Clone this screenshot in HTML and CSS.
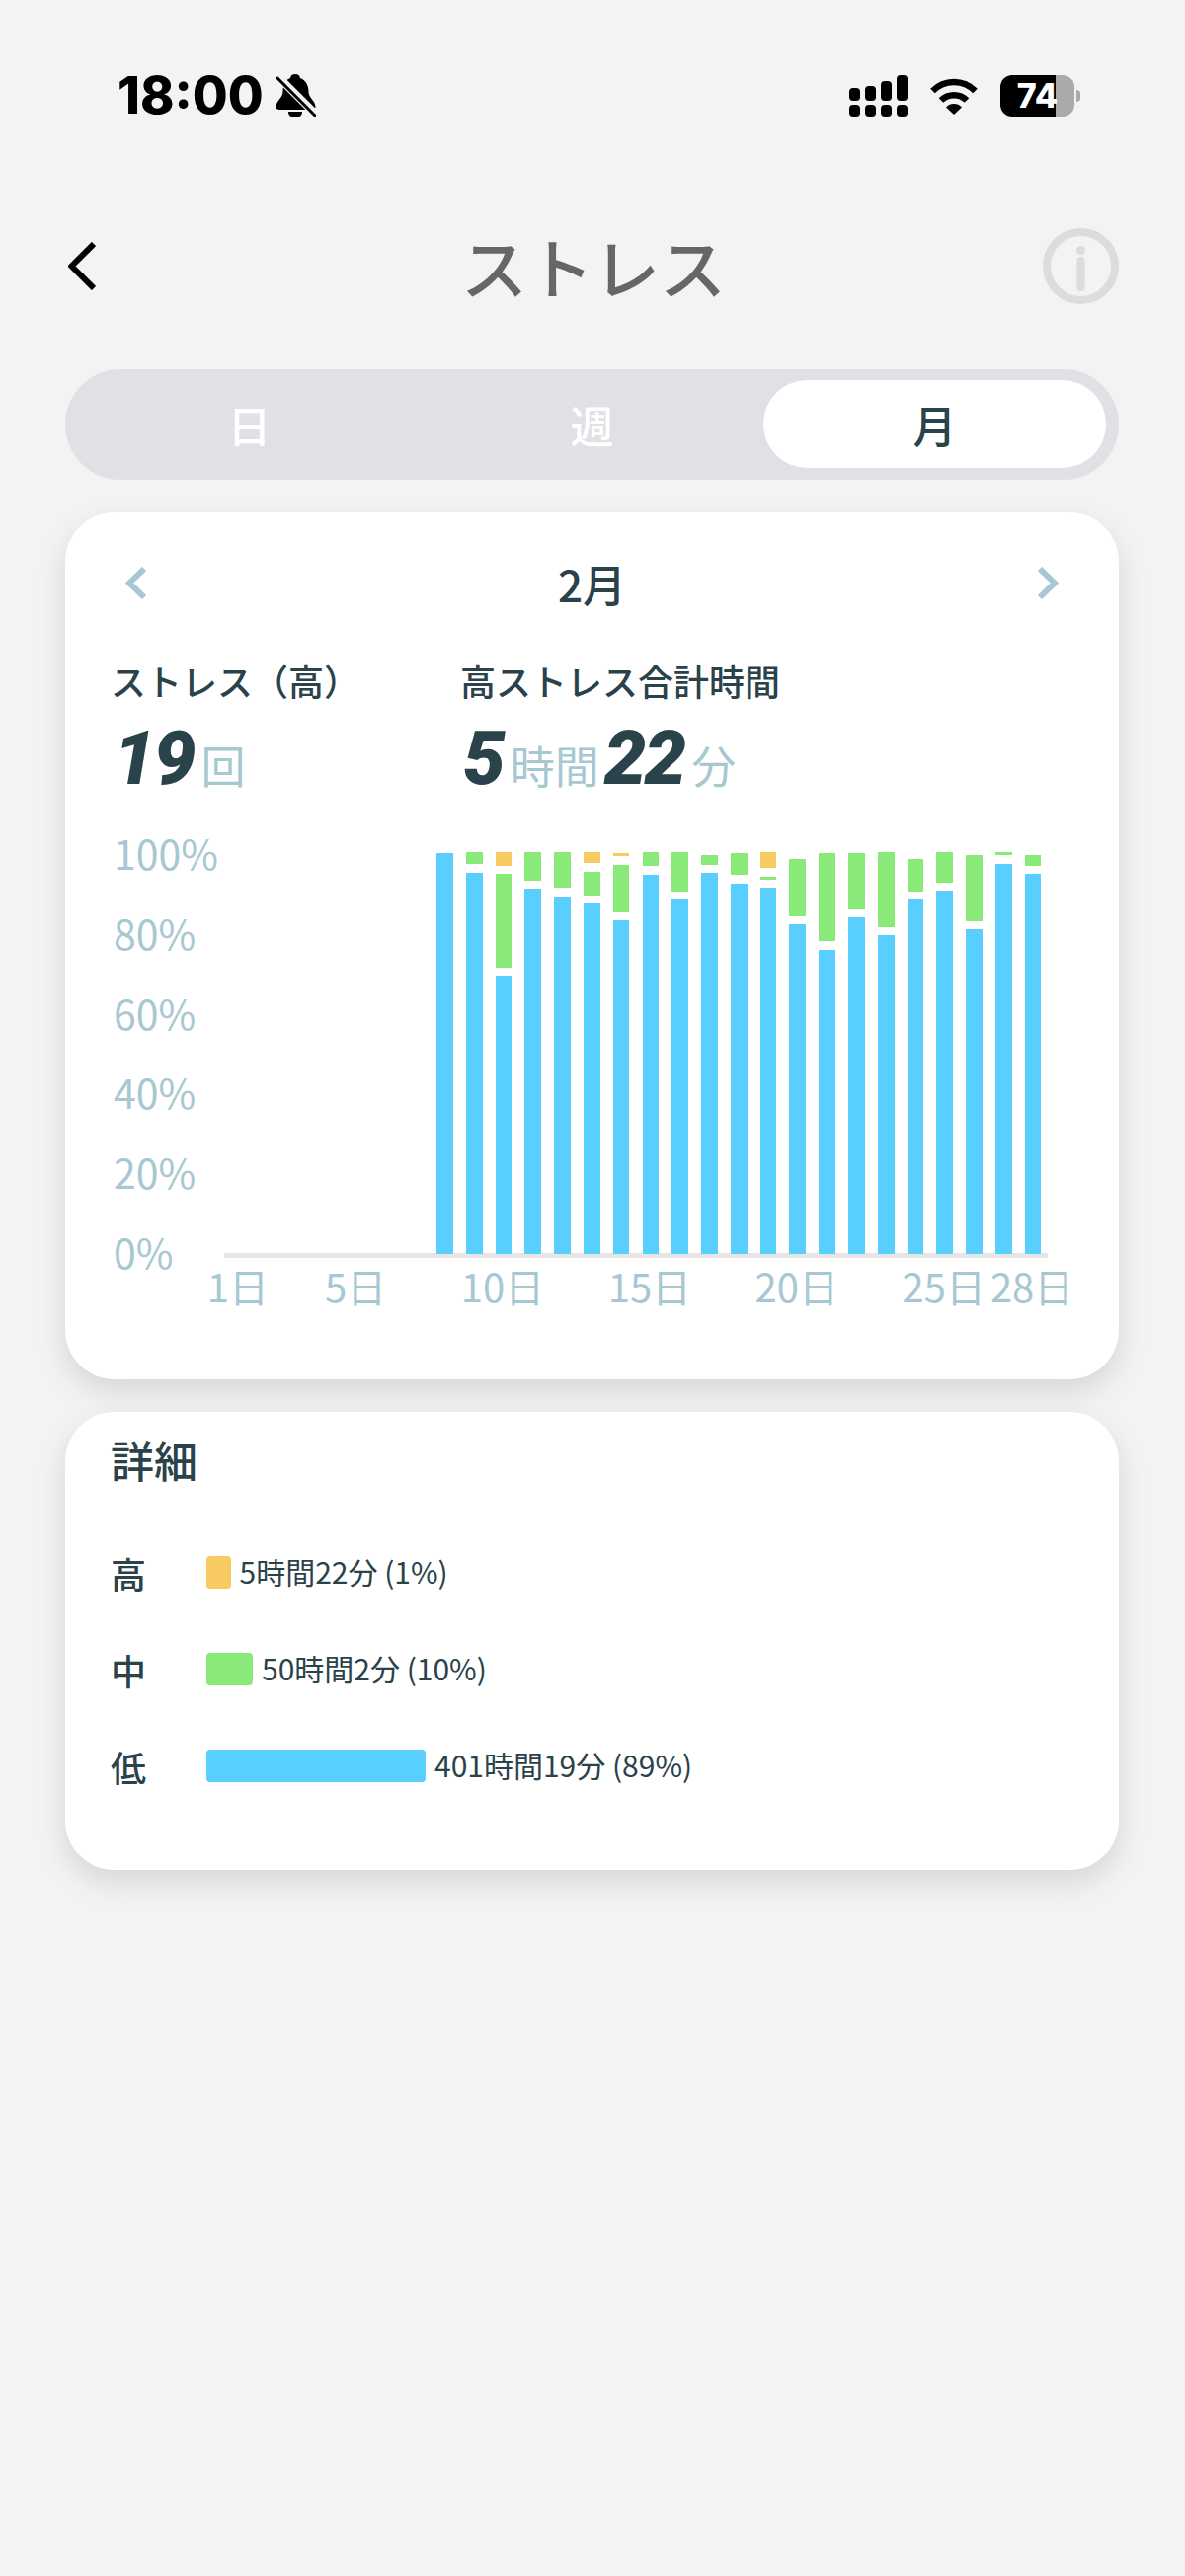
FILE: index.html
```html
<!DOCTYPE html>
<html lang="ja">

<head>
    <meta charset="UTF-8">
    <meta name="viewport" content="width=device-width, initial-scale=1.0">
    <title>ストレス</title>
    <link rel="stylesheet" href="styles.css">
</head>

<body>
    <div class="page">

        <div class="status">
            <div class="status-left">
                <span class="time">18:00</span>
                <svg class="bell" width="41" height="44" viewBox="0 0 41 44">
                    <path d="M20 0c-3 0-4.500 1.500-5 4C9 6 7.500 12 7.500 18c0 6-7 9-7 15 0 2 1.500 3 3.500 3h33c2 0 3.500-1 3.500-3 0-6-7-9-7-15 0-6-2.500-12-8.500-14C24.500 1.500 23 0 20 0z" fill="#000" />
                    <path d="M13 38h14c0 4-3 6-7 6s-7-2-7-6z" fill="#000" />
                    <line x1="1" y1="1" x2="40" y2="40" stroke="#f3f3f4" stroke-width="8" />
                    <line x1="2" y1="4" x2="40" y2="42" stroke="#000" stroke-width="3" stroke-linecap="round" />
                </svg>
            </div>
            <div class="status-right">
                <svg width="59" height="42" viewBox="0 0 59 42" fill="#000">
                    <rect x="0" y="30" width="11" height="12" rx="4" />
                    <rect x="16" y="30" width="11" height="12" rx="4" />
                    <rect x="32" y="30" width="11" height="12" rx="4" />
                    <rect x="48" y="30" width="11" height="12" rx="4" />
                    <rect x="0" y="13" width="11" height="13" rx="4" />
                    <rect x="16" y="11" width="11" height="15" rx="4" />
                    <rect x="32" y="6" width="11" height="20" rx="4" />
                    <rect x="48" y="0" width="11" height="26" rx="4" />
                </svg>
                <svg width="50" height="38" viewBox="0 0 50 38">
                    <path d="M3.500 14A30 30 0 0 1 46.500 14" fill="none" stroke="#000" stroke-width="6.500" />
                    <path d="M12 23.500A18.500 18.500 0 0 1 38 23.500" fill="none" stroke="#000" stroke-width="6.500" />
                    <path d="M17 30.500A11 11 0 0 1 33 30.500L25 38z" fill="#000" />
                </svg>
                <div class="battery">74</div>
            </div>
        </div>

        <div class="header">
            <svg width="28" height="49" viewBox="0 0 28 49">
                <polyline points="26,2 3.500,24.500 26,47" fill="none" stroke="#000" stroke-width="6" />
            </svg>
            <div class="title">ストレス</div>
            <svg class="info" width="77" height="77" viewBox="0 0 77 77">
                <circle cx="38.500" cy="38.500" r="34.500" fill="none" stroke="#dcdcdc" stroke-width="8" />
                <circle cx="38.500" cy="22.500" r="4.500" fill="#dcdcdc" />
                <line x1="38.500" y1="33" x2="38.500" y2="60" stroke="#dcdcdc" stroke-width="8" stroke-linecap="round" />
            </svg>
        </div>

        <div class="tabs">
            <div class="tab">日</div>
            <div class="tab">週</div>
            <div class="tab active">月</div>
        </div>

        <div class="card chart-card">
            <div class="month-row">
                <svg width="21" height="33" viewBox="0 0 21 33">
                    <polyline points="19,2 4,16.500 19,31" fill="none" stroke="#a7c8d2" stroke-width="6" />
                </svg>
                <div class="month">2月</div>
                <svg width="21" height="33" viewBox="0 0 21 33">
                    <polyline points="2,2 17,16.500 2,31" fill="none" stroke="#a7c8d2" stroke-width="6" />
                </svg>
            </div>

            <div class="stats">
                <div class="stat">
                    <div class="stat-label">ストレス（高）</div>
                    <div class="stat-value"><b>19</b><span>回</span></div>
                </div>
                <div class="stat">
                    <div class="stat-label">高ストレス合計時間</div>
                    <div class="stat-value"><b>5</b><span>時間</span><b>22</b><span>分</span></div>
                </div>
            </div>

            <div class="chart">
                <div class="y-axis">
                    <span>100%</span>
                    <span>80%</span>
                    <span>60%</span>
                    <span>40%</span>
                    <span>20%</span>
                    <span>0%</span>
                </div>
                <div class="plot">
                    <div class="bars">
                        <div class="bar"><i class="low" style="height:406px"></i></div>
                        <div class="bar"><i class="mid" style="height:12px"></i><i class="low" style="height:386px"></i></div>
                        <div class="bar"><i class="high" style="height:13.300px"></i><i class="mid" style="height:95.300px"></i><i class="low" style="height:281px"></i></div>
                        <div class="bar"><i class="mid" style="height:28.700px"></i><i class="low" style="height:369.300px"></i></div>
                        <div class="bar"><i class="mid" style="height:36px"></i><i class="low" style="height:362px"></i></div>
                        <div class="bar"><i class="high" style="height:11px"></i><i class="mid" style="height:24px"></i><i class="low" style="height:354.700px"></i></div>
                        <div class="bar"><i class="high" style="height:3.700px"></i><i class="mid" style="height:48px"></i><i class="low" style="height:337.700px"></i></div>
                        <div class="bar"><i class="mid" style="height:14px"></i><i class="low" style="height:384px"></i></div>
                        <div class="bar"><i class="mid" style="height:39.300px"></i><i class="low" style="height:358.700px"></i></div>
                        <div class="bar"><i class="mid" style="height:9.700px"></i><i class="low" style="height:385.300px"></i></div>
                        <div class="bar"><i class="mid" style="height:22.700px"></i><i class="low" style="height:375px"></i></div>
                        <div class="bar"><i class="high" style="height:16px"></i><i class="mid" style="height:3.300px"></i><i class="low" style="height:370.300px"></i></div>
                        <div class="bar"><i class="mid" style="height:58px"></i><i class="low" style="height:333.700px"></i></div>
                        <div class="bar"><i class="mid" style="height:89.700px"></i><i class="low" style="height:308px"></i></div>
                        <div class="bar"><i class="mid" style="height:57.300px"></i><i class="low" style="height:340.300px"></i></div>
                        <div class="bar"><i class="mid" style="height:75.700px"></i><i class="low" style="height:322.300px"></i></div>
                        <div class="bar"><i class="mid" style="height:33px"></i><i class="low" style="height:358.700px"></i></div>
                        <div class="bar"><i class="mid" style="height:30.300px"></i><i class="low" style="height:367.700px"></i></div>
                        <div class="bar"><i class="mid" style="height:66.700px"></i><i class="low" style="height:328.700px"></i></div>
                        <div class="bar"><i class="mid" style="height:3.300px"></i><i class="low" style="height:395px"></i></div>
                        <div class="bar"><i class="mid" style="height:11.300px"></i><i class="low" style="height:384.300px"></i></div>
                    </div>
                    <div class="x-axis">
                        <span style="grid-column:1">1日</span>
                        <span style="grid-column:5">5日</span>
                        <span style="grid-column:10">10日</span>
                        <span style="grid-column:15">15日</span>
                        <span style="grid-column:20">20日</span>
                        <span style="grid-column:25">25日</span>
                        <span style="grid-column:28">28日</span>
                    </div>
                </div>
            </div>
        </div>

        <div class="card detail-card">
            <div class="detail-title">詳細</div>
            <div class="detail-row">
                <div class="detail-label">高</div>
                <div class="detail-bar high" style="width:24.500px"></div>
                <div class="detail-text">5時間22分 (1%)</div>
            </div>
            <div class="detail-row">
                <div class="detail-label">中</div>
                <div class="detail-bar mid" style="width:47px"></div>
                <div class="detail-text">50時間2分 (10%)</div>
            </div>
            <div class="detail-row">
                <div class="detail-label">低</div>
                <div class="detail-bar low" style="width:222px"></div>
                <div class="detail-text">401時間19分 (89%)</div>
            </div>
        </div>

    </div>
</body>

</html>
```
FILE: styles.css
```css
* {
    box-sizing: border-box;
}

body {
    margin: 0;
    background-color: #f3f3f4;
    font-family: "Noto Sans CJK JP", "Noto Sans", sans-serif;
    color: #2a424a;
}

.page {
    width: 1200px;
    height: 2609px;
    padding: 66px 67px 0 66px;
    overflow: hidden;
}

/* status bar */
.status {
    height: 62px;
    display: flex;
    align-items: center;
    justify-content: space-between;
    padding-left: 53px;
    color: #000;
}

.status-left {
    display: flex;
    align-items: center;
    gap: 12px;
}

.time {
    font-family: Inter, sans-serif;
    font-size: 52px;
    font-weight: 800;
    line-height: 62px;
}

.status-right {
    display: flex;
    align-items: center;
    gap: 22px;
    padding-right: 45px;
}

.battery {
    position: relative;
    width: 75px;
    height: 42px;
    border-radius: 12px;
    background: linear-gradient(90deg, #000 74.500%, #aaa 74.500%);
    color: #fff;
    font-family: Inter, sans-serif;
    font-size: 34px;
    font-weight: 800;
    line-height: 42px;
    text-align: center;
}

.battery::after {
    content: "";
    position: absolute;
    left: 77px;
    top: 15px;
    width: 4px;
    height: 12px;
    border-radius: 0 6px 6px 0;
    background-color: #aaa;
}

/* header */
.header {
    height: 78px;
    margin-top: 102px;
    padding-left: 3px;
    display: grid;
    grid-template-columns: 1fr auto 1fr;
    align-items: center;
}

.title {
    font-size: 67px;
    font-weight: 500;
    line-height: 78px;
    color: #666;
}

.info {
    justify-self: end;
}

/* 日 週 月 */
.tabs {
    height: 112px;
    margin-top: 66px;
    padding: 11px 13px;
    border-radius: 56px;
    background-color: #e0e0e5;
    display: flex;
    justify-content: space-between;
}

.tab {
    width: 347px;
    border-radius: 45px;
    color: #fff;
    font-size: 44px;
    font-weight: 500;
    line-height: 90px;
    text-align: center;
}

.tab.active {
    height: 89px;
    background-color: #fff;
    color: #2a424a;
}

/* cards */
.card {
    background-color: #fff;
    border-radius: 50px;
    box-shadow: 0 12px 30px rgba(0, 0, 0, 0.12);
    margin-top: 33px;
}

.chart-card {
    padding: 55px 0 73px;
}

.month-row {
    display: flex;
    align-items: center;
    justify-content: space-between;
    padding: 0 61px;
    height: 33px;
}

.month {
    font-size: 44px;
    font-weight: 500;
    line-height: 33px;
    padding-top: 2px;
}

.stats {
    margin-top: 60px;
    padding-left: 46px;
    display: grid;
    grid-template-columns: 354px auto;
}

.stat-label {
    font-size: 36px;
    font-weight: 500;
    line-height: 44px;
}

.stat-value {
    display: flex;
    align-items: baseline;
    height: 84px;
    margin-top: 15px;
    line-height: 84px;
}

.stat-value b {
    font-family: Roboto, sans-serif;
    font-size: 76px;
    font-weight: 900;
    font-style: italic;
    letter-spacing: -2px;
    margin-left: 3px;
}

.stat-value span {
    font-size: 45px;
    color: #a7c8d2;
    margin-left: 7px;
}

.stat-value span + b {
    margin-left: 5px;
}

/* chart */
.chart {
    margin-top: 53px;
    display: flex;
}

.y-axis {
    width: 161px;
    height: 404px;
    padding-left: 49px;
    display: flex;
    flex-direction: column;
    justify-content: space-between;
    color: #a7c8d2;
    font-size: 41px;
}

.y-axis span {
    height: 0;
    line-height: 0;
}

.plot {
    width: 834px;
}

.bars {
    height: 411px;
    border-bottom: 5px solid #e6e6e6;
    display: grid;
    grid-template-columns: repeat(28, minmax(0, 1fr));
    justify-items: center;
}

.bar {
    width: 16.700px;
    height: 100%;
    display: flex;
    flex-direction: column;
    justify-content: flex-end;
    gap: 8.300px;
}

.bar:first-child {
    grid-column-start: 8;
}

.bar i {
    display: block;
}

.high {
    background-color: #f7cb62;
}

.mid {
    background-color: #88e878;
}

.low {
    background-color: #58cfff;
}

.x-axis {
    margin: 6px 1px 0 -1px;
    display: grid;
    grid-template-columns: repeat(28, minmax(0, 1fr));
    justify-items: center;
    color: #a7c8d2;
    font-size: 40px;
    line-height: 44px;
}

.x-axis span {
    grid-row: 1;
    white-space: nowrap;
}

/* detail */
.detail-card {
    padding: 18px 46px 89px;
}

.detail-title {
    font-size: 44px;
    font-weight: 500;
    line-height: 60px;
    margin-bottom: 68px;
}

.detail-row {
    height: 33px;
    margin-bottom: 65px;
    display: flex;
    align-items: center;
}

.detail-row:last-child {
    margin-bottom: 0;
}

.detail-label {
    width: 97px;
    font-size: 36px;
    font-weight: 500;
}

.detail-bar {
    height: 33px;
    border-radius: 4px;
}

.detail-text {
    margin-left: 9px;
    padding-bottom: 3px;
    font-size: 30px;
    white-space: nowrap;
}
```
